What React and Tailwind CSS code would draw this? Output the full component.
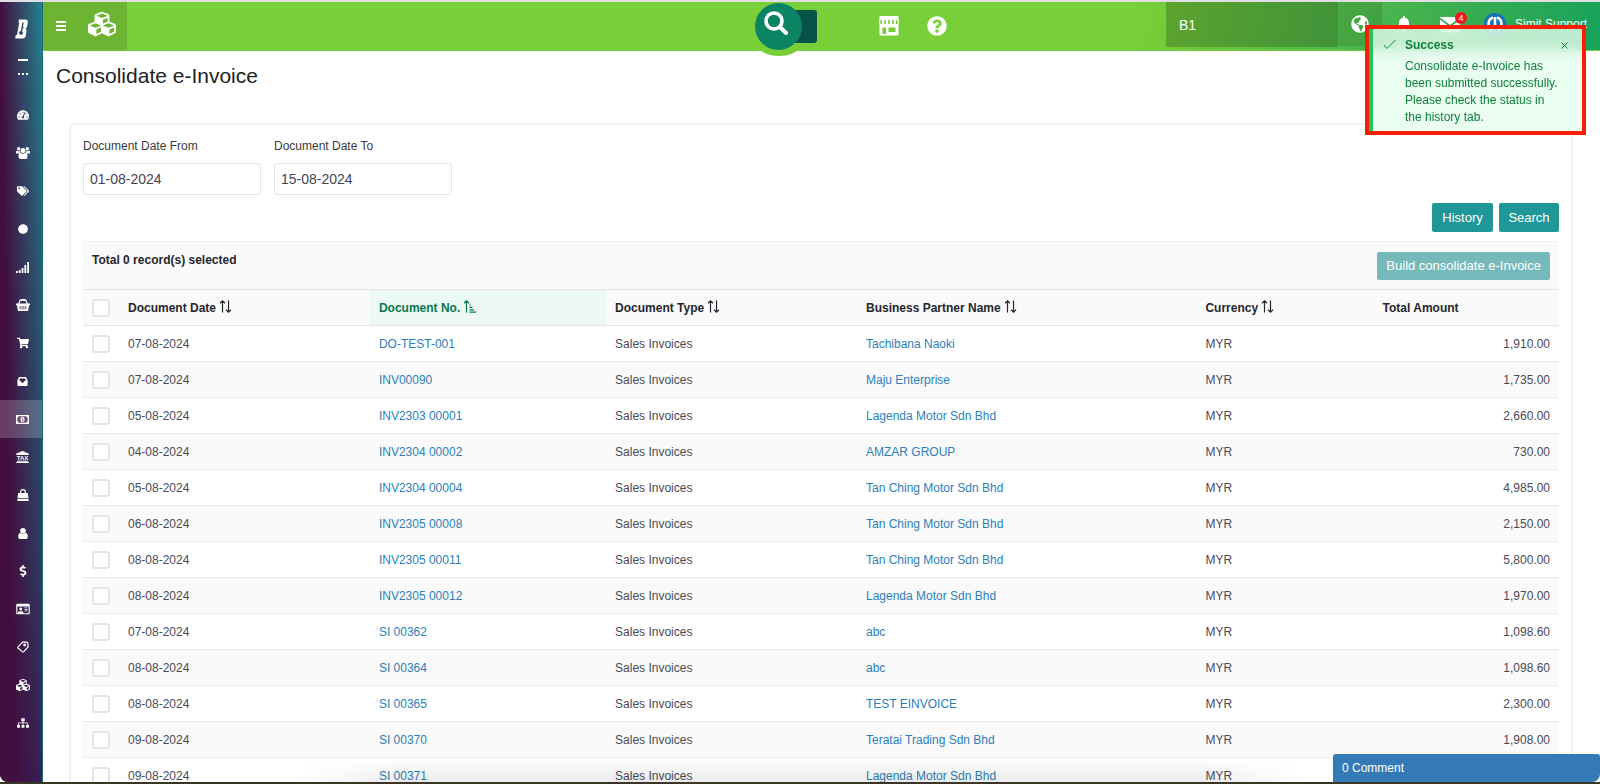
import { useState } from "react";
import {
  FaBell,
  FaCircle,
  FaCubes,
  FaDollarSign,
  FaGlobeAmericas,
  FaQuestionCircle,
  FaRegIdCard,
  FaShoppingCart,
  FaSitemap,
  FaTachometerAlt,
  FaTags,
} from "react-icons/fa";

const UsersIcon = () => (
  <svg viewBox="0 0 14 12" className="w-[14px] h-[12px]" fill="currentColor">
    <circle cx="2.7" cy="1.8" r="1.7" />
    <circle cx="11.3" cy="1.8" r="1.7" />
    <circle cx="7" cy="3.6" r="2.5" />
    <path d="M0 6.6V5.2Q0 3.6 1.2 3.8q1.400.6 2.600.1-.1 1.500.8 2.700zM14 6.600V5.200q0-1.600-1.200-1.400-1.400.6-2.600.1.1 1.500-.8 2.700z" />
    <path d="M4.600 5.800q2.400 1.800 4.800 0 2.100.2 2.100 3.700 0 2.500-1.700 2.500H4.200q-1.700 0-1.700-2.500 0-3.500 2.100-3.700z" />
  </svg>
);

const SignalIcon = () => (
  <svg viewBox="0 0 13 11" className="w-[13px] h-[11px]" fill="currentColor">
    <path d="M0 9h1.8v2H0zM2.8 8h1.8v3H2.8zM5.6 6h1.8v5H5.6zM8.4 3h1.8v8H8.4zM11.2 0H13v11h-1.8z" />
  </svg>
);

const BasketIcon = () => (
  <svg viewBox="0 0 14 12" className="w-[14px] h-[12px]">
    <path d="M2.6 5 4.2 1h5.6l1.6 4" fill="none" stroke="currentColor" strokeWidth="1.2" />
    <path d="M4.6 0h4.8v1.8H4.6zM0 4.6h14v1.7h-.9L12 12H2L.9 6.3H0z" fill="currentColor" />
    <path d="M4.2 7v3.4M6.1 7v3.4M7.9 7v3.4M9.8 7v3.4" stroke="#43254d" strokeWidth=".8" />
  </svg>
);

const InboxIcon = () => (
  <svg viewBox="0 0 11 9" className="w-[11px] h-[9px]">
    <path d="M2 0h7l1.6 3.6V8q0 1-1 1H1.4q-1 0-1-1V3.6z" fill="currentColor" />
    <path d="M3 1.4h5l1 2.4H7.6L6.2 5.7H4.8L3.4 3.8H2z" fill="#402347" />
  </svg>
);

const MoneyIcon = () => (
  <svg viewBox="0 0 13 9" className="w-[13px] h-[9px]">
    <path d="M0 0h13v9H0z" fill="currentColor" />
    <path d="M2.6 1.3h7.8q0 1.2 1.3 1.4v3.6q-1.3.2-1.3 1.4H2.6q0-1.2-1.3-1.4V2.7q1.3-.2 1.3-1.4z" fill="#6d4a70" />
    <ellipse cx="6.5" cy="4.5" rx="2" ry="2.8" fill="currentColor" />
    <path d="M5.8 3.2h1v2.6M5.6 6h2" stroke="#6d4a70" strokeWidth=".7" fill="none" />
  </svg>
);

const TaxIcon = () => (
  <svg viewBox="0 0 13 12" className="w-[13px] h-[12px]" fill="currentColor">
    <path d="M6.5 0 12.7 2.6v1.3H.3V2.6zM1 9.7h11v1H1zM.2 11h12.6v1H.2z" />
    <text x="6.5" y="9.4" textAnchor="middle" fontSize="6" fontWeight="700">
      TAX
    </text>
  </svg>
);

const BagIcon = () => (
  <svg viewBox="0 0 12 12" className="w-[12px] h-[12px]">
    <path d="M3.7 5V3q0-2.3 2.3-2.3T8.3 3v2" fill="none" stroke="currentColor" strokeWidth="1.2" />
    <path d="M1.2 4h9.6l.7 5.2H.5zM.4 10h11.2v2H.4z" fill="currentColor" />
  </svg>
);

const UserIcon = () => (
  <svg viewBox="0 0 10 11" className="w-[10px] h-[11px]" fill="currentColor">
    <circle cx="5" cy="2.8" r="2.8" />
    <path d="M2.300 4.800q2.700 2.200 5.400 0Q9.800 5.200 9.800 8.800 9.800 11 8.200 11H1.800Q.2 11 .2 8.800.2 5.200 2.300 4.800z" />
  </svg>
);

const TagOutlineIcon = () => (
  <svg viewBox="0 0 12 12" className="w-[12px] h-[12px]" fill="none" stroke="currentColor" strokeWidth="1.2">
    <path d="M5.600 1.200 9.400 1q1.400 0 1.500 1.400l.1 3.600-4.200 4.600q-.8.8-1.600 0L1.300 7.200q-.8-.8 0-1.600z" />
    <circle cx="7.600" cy="4" r=".8" />
  </svg>
);

const StoreIcon = () => (
  <svg viewBox="0 0 20 20" className="w-[20px] h-[20px]">
    <path d="M1.500 0h17q1 0 1 1L20 7q0 1.200-.5 1.400V18.500q0 1-1 1h-17q-1 0-1-1V8.400Q0 8.200 0 7L.5 1q0-1 1-1z" fill="currentColor" />
    <path d="M2.500 4 2 8M6.200 4 6 8M10 4v4M13.800 4l.2 4M17.500 4l.5 4" stroke="#76c938" strokeWidth="1.600" />
    <path d="M3.500 11.500h3.500v6.500H3.500zM9.500 11.500h7v4.500h-7z" fill="#76c938" />
  </svg>
);

const MailIcon = () => (
  <svg viewBox="0 0 20 15" className="w-[20px] h-[15px]">
    <path d="M0 0h20v15H0z" fill="currentColor" />
    <path d="m0 1.500 10 7.500 10-7.500" fill="none" stroke="#3aad54" strokeWidth="1.800" />
  </svg>
);

const LogoIcon = () => (
  <svg viewBox="0 0 13 20" className="w-[13px] h-[20px]">
    <path d="M4 .500h6.500q2.700 0 2.300 3L12.200 7q-.3 1.800-1.600 2.600 1.200 1 .9 2.900l-.6 3.700q-.5 3.300-3.600 3.300H.200L.8 16h1.200L4.200 3.800H3.400z" fill="#fff" />
    <path d="M8 3.500 6.600 12" stroke="#24395c" strokeWidth="1.300" />
    <circle cx="6" cy="13.800" r="1.900" fill="#24395c" />
    <path d="M7.500 8.800h1.600" stroke="#24395c" strokeWidth=".8" />
  </svg>
);

const SortIcon = () => (
  <svg viewBox="0 0 13 13" className="w-[13px] h-[13px]" fill="none" stroke="currentColor" strokeWidth="1.200">
    <path d="M3.500 12.500V1M1 3.200 3.500.800 6 3.200M9.500.500V12M7 9.800l2.500 2.400L12 9.800" />
  </svg>
);

const SortedIcon = () => (
  <svg viewBox="0 0 13 13" className="w-[13px] h-[13px]" fill="none" stroke="currentColor" strokeWidth="1.200">
    <path d="M3.500 12.500V1M1 3.200 3.500.800 6 3.200M6.500 5h1.500M6.500 7.400h3M6.500 9.800h4.500M6.500 12.200H13" />
  </svg>
);

const SearchIcon = () => (
  <svg viewBox="0 0 24 24" className="w-6 h-6" fill="none" stroke="#fff" strokeLinecap="round">
    <circle cx="10" cy="10" r="8" strokeWidth="3.600" />
    <path d="m16 16 6 6" strokeWidth="4" />
  </svg>
);

const menu = [
  { label: "Dashboard", icon: <FaTachometerAlt className="w-3 h-3" /> },
  { label: "Contacts", icon: <UsersIcon /> },
  { label: "Products", icon: <FaTags className="w-3 h-3" /> },
  { label: "General", icon: <FaCircle className="w-[10px] h-[10px]" /> },
  { label: "Reports", icon: <SignalIcon /> },
  { label: "Purchases", icon: <BasketIcon /> },
  { label: "Sales", icon: <FaShoppingCart className="w-3 h-3" /> },
  { label: "Inbox", icon: <InboxIcon /> },
  { label: "e-Invoice", icon: <MoneyIcon />, active: true },
  { label: "Tax", icon: <TaxIcon /> },
  { label: "Point of sale", icon: <BagIcon /> },
  { label: "Employees", icon: <UserIcon /> },
  { label: "Accounts", icon: <FaDollarSign className="w-3 h-3" /> },
  { label: "Membership", icon: <FaRegIdCard className="w-[14px] h-3" /> },
  { label: "Promotions", icon: <TagOutlineIcon /> },
  { label: "Assets", icon: <FaCubes className="w-[14px] h-[14px]" /> },
  { label: "Organisation", icon: <FaSitemap className="w-3 h-3" /> },
];

const invoices = [
  ["07-08-2024", "DO-TEST-001", "Tachibana Naoki", "1,910.00"],
  ["07-08-2024", "INV00090", "Maju Enterprise", "1,735.00"],
  ["05-08-2024", "INV2303 00001", "Lagenda Motor Sdn Bhd", "2,660.00"],
  ["04-08-2024", "INV2304 00002", "AMZAR GROUP", "730.00"],
  ["05-08-2024", "INV2304 00004", "Tan Ching Motor Sdn Bhd", "4,985.00"],
  ["06-08-2024", "INV2305 00008", "Tan Ching Motor Sdn Bhd", "2,150.00"],
  ["08-08-2024", "INV2305 00011", "Tan Ching Motor Sdn Bhd", "5,800.00"],
  ["08-08-2024", "INV2305 00012", "Lagenda Motor Sdn Bhd", "1,970.00"],
  ["07-08-2024", "SI 00362", "abc", "1,098.60"],
  ["08-08-2024", "SI 00364", "abc", "1,098.60"],
  ["08-08-2024", "SI 00365", "TEST EINVOICE", "2,300.00"],
  ["09-08-2024", "SI 00370", "Teratai Trading Sdn Bhd", "1,908.00"],
  ["09-08-2024", "SI 00371", "Lagenda Motor Sdn Bhd", "1,098.60"],
];

const Checkbox = ({ label }) => (
  <input
    type="checkbox"
    aria-label={label}
    className="block appearance-none w-[18px] h-[18px] rounded-[3px] border-2 border-[#e6e6ea] bg-white checked:bg-[#1f9698]"
  />
);

const Sidebar = () => (
  <aside className="w-[43px] shrink-0 rounded-bl-lg border-r border-[#176a7c] text-white bg-[linear-gradient(89deg,#420f3e_25%,transparent_110%),linear-gradient(#1f929a,#206078_60%,#2c2d68)]">
    <a href="#" aria-label="Home" className="flex justify-center h-[56px] pt-[17px]">
      <LogoIcon />
    </a>
    <div className="flex flex-col items-center h-[38px] gap-3 pt-px pl-[3px]">
      <span className="w-[10px] h-[2px] bg-white" />
      <span className="flex gap-[2px]">
        <i className="w-[2px] h-[2px] bg-white" />
        <i className="w-[2px] h-[2px] bg-white" />
        <i className="w-[2px] h-[2px] bg-white" />
      </span>
    </div>
    <nav>
      {menu.map((item) => (
        <a
          key={item.label}
          href="#"
          aria-label={item.label}
          className={`flex items-center justify-center h-[38px] pl-[3px] ${item.active ? "bg-white/20" : ""}`}
        >
          {item.icon}
        </a>
      ))}
    </nav>
  </aside>
);

const Header = () => (
  <header className="flex h-[49px] shrink-0 text-white border-b border-[#6fd03f] bg-[linear-gradient(100deg,#79cf38_70%,#43b14f_88%,#18a25c)]">
    <div className="flex items-center h-full w-[84px] bg-[#6db433] pl-[13px] gap-[22px]">
      <button aria-label="Toggle menu" className="flex flex-col gap-[2px]">
        <i className="w-[10px] h-[2px] bg-white" />
        <i className="w-[10px] h-[2px] bg-white" />
        <i className="w-[10px] h-[2px] bg-white" />
      </button>
      <a href="#" aria-label="Modules" className="pb-1">
        <FaCubes className="w-7 h-7" />
      </a>
    </div>

    <div className="flex items-center ml-auto mr-[219px]">
      <div className="relative flex items-center w-[70px] h-full mr-[54px]">
        <span className="absolute -left-2 -top-2 w-16 h-[62px] rounded-full bg-[#79cf38]" />
        <span className="absolute left-6 top-2 w-[38px] h-[33px] rounded-[3px] bg-[#07534a]" />
        <button
          aria-label="Search"
          className="relative flex items-center justify-center w-[47px] h-[47px] pb-[6px] pr-1 rounded-full bg-[#0b8463]"
        >
          <SearchIcon />
        </button>
      </div>
      <div className="flex gap-7">
        <a href="#" aria-label="Store">
          <StoreIcon />
        </a>
        <a href="#" aria-label="Help">
          <FaQuestionCircle className="w-5 h-5" />
        </a>
      </div>
    </div>

    <div className="flex items-start text-xs">
      <div className="flex items-center w-[172px] h-[45px] pl-[13px] text-sm bg-black/20">B1</div>
      <a href="#" aria-label="Language" className="flex items-center justify-center w-[44px] h-[44px] mr-[14px] bg-black/10">
        <FaGlobeAmericas className="w-[18px] h-[18px]" />
      </a>
      <a href="#" aria-label="Notifications" className="flex items-center h-[44px] mr-[28px]">
        <FaBell className="w-4 h-4" />
      </a>
      <a href="#" aria-label="Messages" className="relative flex items-center h-[44px] mr-[24px]">
        <MailIcon />
        <span className="absolute left-[15px] top-[10px] flex items-center justify-center w-3 h-3 rounded-full bg-[#f5131d] text-[9px]">
          4
        </span>
      </a>
      <a href="#" className="flex items-center h-[44px] gap-[9px] pr-[13px]">
        <svg viewBox="0 0 22 22" className="w-[22px] h-[22px]">
          <circle cx="11" cy="11" r="11" fill="#1770b8" />
          <path d="M9 4.500Q4.500 6 4.500 11q0 4.500 4 6.500M13 4.500q4.500 1.500 4.500 6.500 0 4.500-4 6.500M11 4v8" fill="none" stroke="#fff" strokeWidth="2.600" />
        </svg>
        Simit Support
      </a>
    </div>
  </header>
);

const Toast = ({ onClose }) => (
  <div className="absolute right-[14px] top-[23px] w-[221px] h-[110px] border-4 border-[#f81e06]">
    <div
      role="alert"
      className="flex h-full border-l-4 border-[#1fc55b] bg-[#e4fdee]/80 backdrop-blur-[6px] text-[#11813c] pl-[10px] pr-[12px] pt-[9px]"
    >
      <svg viewBox="0 0 13 13" className="w-[13px] h-[13px] mr-[9px] shrink-0" fill="none" stroke="currentColor">
        <path d="m1 7 3 3.500L12.500 2" />
      </svg>
      <div className="flex-1 text-xs">
        <div className="flex justify-between leading-[15px] font-bold">
          Success
          <button aria-label="Close" onClick={onClose} className="w-[9px]">
            <svg viewBox="0 0 7 7" className="w-[7px] h-[7px]" fill="none" stroke="currentColor">
              <path d="m.5.5 6 6M6.500.5l-6 6" />
            </svg>
          </button>
        </div>
        <p className="mt-[5px] leading-[17px] whitespace-nowrap">
          Consolidate e-Invoice has
          <br />
          been submitted successfully.
          <br />
          Please check the status in
          <br />
          the history tab.
        </p>
      </div>
    </div>
  </div>
);

const DateField = ({ id, label, value }) => (
  <div className="w-[178px]">
    <label htmlFor={id} className="block text-xs leading-4 text-[#3a3a3a]">
      {label}
    </label>
    <input
      id={id}
      type="text"
      defaultValue={value}
      className="block w-full h-8 mt-[9px] px-[6px] rounded-[3px] border border-[#e6e6ea] text-sm text-[#45454f]"
    />
  </div>
);

const ColumnHead = ({ title, sorted, plain }) => (
  <th className={`px-[9px] text-left font-bold ${sorted ? "bg-[#ebf8f4] text-[#08784f]" : "text-[#26262e]"}`}>
    <span className="flex items-center gap-[3px]">
      {title}
      {!plain && <span className="pb-[3px]">{sorted ? <SortedIcon /> : <SortIcon />}</span>}
    </span>
  </th>
);

const InvoiceTable = () => (
  <table className="w-full table-fixed border-collapse text-xs text-[#4a4a55]">
    <colgroup>
      <col className="w-9" />
      <col className="w-[17%]" />
      <col className="w-[16%]" />
      <col className="w-[17%]" />
      <col className="w-[23%]" />
      <col className="w-[12%]" />
      <col />
    </colgroup>
    <thead>
      <tr className="h-9 bg-[#fafafa] border-y border-[#e6e6e9]">
        <th className="pl-[9px]">
          <Checkbox label="Select all" />
        </th>
        <ColumnHead title="Document Date" />
        <ColumnHead title="Document No." sorted />
        <ColumnHead title="Document Type" />
        <ColumnHead title="Business Partner Name" />
        <ColumnHead title="Currency" />
        <ColumnHead title="Total Amount" plain />
      </tr>
    </thead>
    <tbody>
      {invoices.map(([date, no, partner, amount]) => (
        <tr key={no} className="h-9 border-b border-[#ececef] even:bg-[#fafafa]">
          <td className="pl-[9px]">
            <Checkbox label={`Select ${no}`} />
          </td>
          <td className="px-[9px]">{date}</td>
          <td className="px-[9px]">
            <a href="#" className="text-[#2b80b9]">{no}</a>
          </td>
          <td className="px-[9px]">Sales Invoices</td>
          <td className="px-[9px]">
            <a href="#" className="text-[#2b80b9]">{partner}</a>
          </td>
          <td className="px-[9px]">MYR</td>
          <td className="px-[9px] text-right">{amount}</td>
        </tr>
      ))}
    </tbody>
  </table>
);

const App = () => {
  const [showToast, setShowToast] = useState(true);

  return (
    <div className="relative flex h-screen overflow-hidden bg-white border-t-2 border-b-2 border-t-[#e2dfe4] border-b-[#3a3527] font-['Liberation_Sans',Arial,sans-serif]">
      <Sidebar />
      <div className="flex flex-col flex-1 min-w-0">
        <Header />
        <main className="flex-1 min-h-0 overflow-hidden pl-[13px] pr-[27px]">
          <h1 className="pt-[10px] text-[21px] leading-[30px] text-[#222]">Consolidate e-Invoice</h1>
          <section className="mt-8 ml-[13px] border-2 border-[#f3f3f5] rounded-[5px] px-3 pt-[13px] pb-5">
            <div className="flex gap-[13px]">
              <DateField id="date-from" label="Document Date From" value="01-08-2024" />
              <DateField id="date-to" label="Document Date To" value="15-08-2024" />
            </div>
            <div className="flex justify-end gap-[6px] mt-2 text-[13px] text-white">
              <button className="w-[61px] h-[29px] rounded-[2px] bg-[#1f9698]">History</button>
              <button className="w-[60px] h-[29px] rounded-[2px] bg-[#1f9698]">Search</button>
            </div>
            <div className="flex justify-between h-[48px] mt-[9px] px-[9px] pt-[10px] border-t border-[#f2f2f4] bg-[#fafafa]">
              <strong className="text-xs leading-[16px] text-[#26262e]">Total 0 record(s) selected</strong>
              <button disabled className="h-7 px-[9px] rounded-[2px] bg-[#76b9ba] text-[13px] text-white">
                Build consolidate e-Invoice
              </button>
            </div>
            <InvoiceTable />
          </section>
        </main>
      </div>

      <div className="absolute inset-x-[300px] bottom-0 h-6 pointer-events-none bg-[linear-gradient(to_top,rgba(0,0,0,.08),transparent)] [mask-image:linear-gradient(to_right,transparent,#000_10%,#000_90%,transparent)]" />
      <button className="absolute right-0 bottom-0 w-[267px] h-[28px] pl-[9px] rounded-t-[3px] rounded-br-lg bg-[#337ab7] text-left text-xs text-white">
        0 Comment
      </button>
      {showToast && <Toast onClose={() => setShowToast(false)} />}
    </div>
  );
};

export default App;
